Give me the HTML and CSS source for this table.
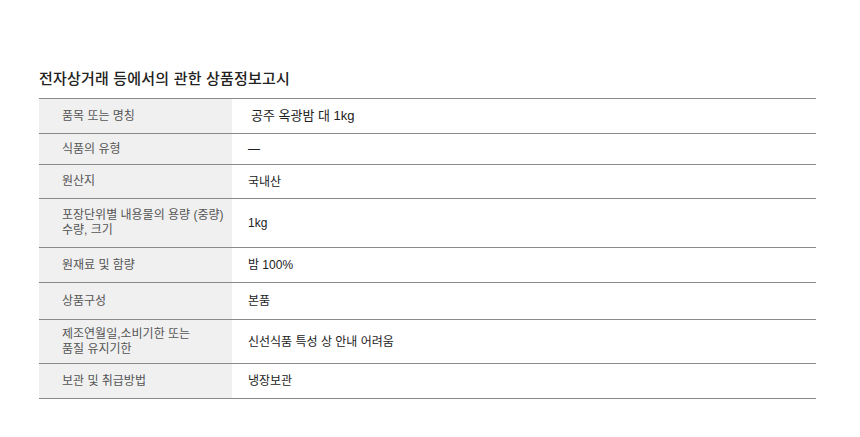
FILE: index.html
```html
<!DOCTYPE html>
<html lang="ko">
<head>
<meta charset="utf-8">
<link rel="stylesheet" href="styles.css">
</head>
<body>
<section class="notice">
  <h2 class="title">전자상거래 등에서의 관한 상품정보고시</h2>
  <div class="table">
    <div class="row r1"><div class="th">품목 또는 명칭</div><div class="td td-first">공주 옥광밤 대 1kg</div></div>
    <div class="row r2"><div class="th">식품의 유형</div><div class="td">—</div></div>
    <div class="row r3"><div class="th">원산지</div><div class="td">국내산</div></div>
    <div class="row r4"><div class="th">포장단위별 내용물의 용량 (중량)<br>수량, 크기</div><div class="td">1kg</div></div>
    <div class="row r5"><div class="th">원재료 및 함량</div><div class="td">밤 100%</div></div>
    <div class="row r6"><div class="th">상품구성</div><div class="td">본품</div></div>
    <div class="row r7"><div class="th">제조연월일,소비기한 또는<br>품질 유지기한</div><div class="td">신선식품 특성 상 안내 어려움</div></div>
    <div class="row r8"><div class="th">보관 및 취급방법</div><div class="td">냉장보관</div></div>
  </div>
</section>
</body>
</html>
```
FILE: styles.css
```css
html, body {
  margin: 0;
  padding: 0;
  background: #fff;
}
body {
  font-family: "Liberation Sans", "Noto Sans CJK KR", sans-serif;
  color: #222;
}
.notice {
  padding: 68px 44px 0 39px;
}
.title {
  margin: 0 0 8px 0;
  font-size: 15px;
  font-weight: 500;
  line-height: 22px;
  color: #222;
  letter-spacing: 0.2px;
}
.table {
  border-top: 1px solid #8a8a8a;
}
.row {
  display: grid;
  grid-template-columns: 193px 1fr;
  border-bottom: 1px solid #8a8a8a;
}
.th {
  background: #f0f0f0;
  padding-left: 23px;
  font-size: 12px;
  line-height: 15px;
  color: #555;
  display: flex;
  align-items: center;
}
.td {
  padding-left: 16px;
  font-size: 12px;
  line-height: 16px;
  color: #222;
  display: flex;
  align-items: center;
}
.td-first {
  padding-left: 19px;
  font-size: 13px;
}
.r1 { height: 34px; }
.r2 { height: 30px; }
.r3 { height: 33px; }
.r4 { height: 48px; }
.r5 { height: 34px; }
.r6 { height: 36px; }
.r7 { height: 43px; }
.r8 { height: 34px; }
```
